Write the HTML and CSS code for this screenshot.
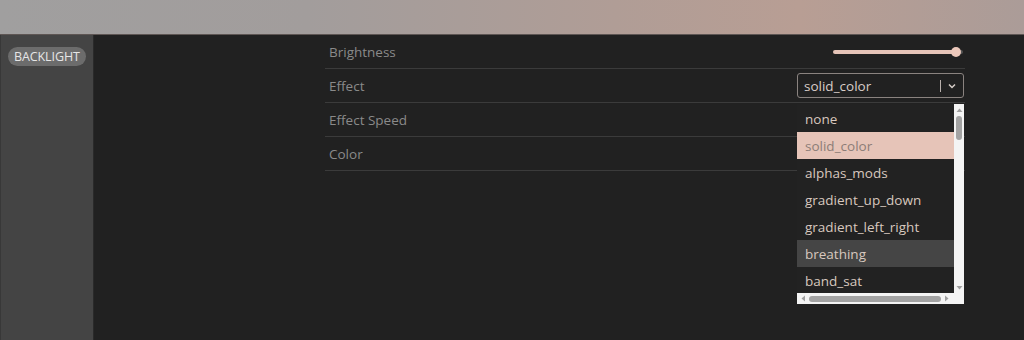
FILE: index.html
```html
<!DOCTYPE html>
<html>
<head>
<meta charset="utf-8">
<link rel="stylesheet" href="styles.css">
</head>
<body>
<header class="topbar"></header>
<div class="layout">
  <aside class="sidebar">
    <span class="badge">BACKLIGHT</span>
  </aside>
  <main class="content">
    <div class="settings">
      <div class="row">
        <span class="label">Brightness</span>
        <div class="slider">
          <div class="track"></div>
          <div class="thumb"></div>
          <div class="rest"></div>
        </div>
      </div>
      <div class="row">
        <span class="label">Effect</span>
        <div class="select-wrap">
          <div class="select">
            <span class="value">solid_color</span>
            <span class="sep"></span>
            <svg class="chev" width="10" height="10" viewBox="0 0 10 10"><path d="M2 3.5 L5 6.5 L8 3.5" fill="none" stroke="#d6cdc8" stroke-width="1.5"/></svg>
          </div>
          <div class="dropdown">
            <div class="list">
              <div class="opt">none</div>
              <div class="opt selected">solid_color</div>
              <div class="opt">alphas_mods</div>
              <div class="opt">gradient_up_down</div>
              <div class="opt">gradient_left_right</div>
              <div class="opt hover">breathing</div>
              <div class="opt">band_sat</div>
            </div>
            <div class="vscroll">
              <svg class="arrow-up" width="9" height="6" viewBox="0 0 9 6"><path d="M1.5 5 L4.5 1.5 L7.5 5 Z" fill="#a0a0a0"/></svg>
              <div class="vthumb"></div>
              <svg class="arrow-down" width="9" height="6" viewBox="0 0 9 6"><path d="M1.5 1 L4.5 4.5 L7.5 1 Z" fill="#a0a0a0"/></svg>
            </div>
            <div class="hscroll">
              <svg width="6" height="9" viewBox="0 0 6 9"><path d="M5 1.5 L1.5 4.5 L5 7.5 Z" fill="#a0a0a0"/></svg>
              <div class="hthumb"></div>
              <svg width="6" height="9" viewBox="0 0 6 9"><path d="M1 1.5 L4.5 4.5 L1 7.5 Z" fill="#a0a0a0"/></svg>
            </div>
          </div>
        </div>
      </div>
      <div class="row">
        <span class="label">Effect Speed</span>
      </div>
      <div class="row">
        <span class="label">Color</span>
      </div>
    </div>
  </main>
</div>
</body>
</html>
```

FILE: styles.css
```css
* { box-sizing: border-box; }
html, body {
  margin: 0;
  padding: 0;
  width: 1024px;
  height: 340px;
  overflow: hidden;
  background: #212121;
  font-family: "Open Sans", "Noto Sans", sans-serif;
}
.topbar {
  height: 35px;
  background: linear-gradient(90deg, #a09f9f 0%, #a29d9c 30%, #b09d96 60%, #b89e94 78%, #ab9c98 100%);
  border-bottom: 1px solid #5e5654;
}
.layout {
  display: flex;
  height: 305px;
}
.sidebar {
  width: 94px;
  background: #444444;
  border-left: 1px solid #383838;
  border-right: 1px solid #2a2a2a;
  padding: 9px 0 0 7px;
}
.badge {
  display: inline-block;
  height: 19px;
  line-height: 19px;
  padding: 0 6px 0 6px;
  border-radius: 10px;
  background: #6c6c6c;
  color: #e6e6e6;
  font-size: 12.5px;
  letter-spacing: -0.1px;
}
.content {
  flex: 1;
  padding-left: 231px;
}
.settings {
  width: 640px;
}
.row {
  height: 34px;
  border-bottom: 1px solid #3b3b3b;
  display: flex;
  align-items: center;
  justify-content: space-between;
  padding-left: 4px;
  padding-right: 1px;
}
.label {
  color: #8a8a8a;
  font-size: 13.5px;
}
.slider {
  position: relative;
  width: 131px;
  height: 10px;
  margin-right: 1px;
  margin-top: 1px;
}
.track {
  position: absolute;
  left: 1px;
  top: 3px;
  width: 124px;
  height: 4px;
  border-radius: 2px;
  background: #e6c4b8;
}
.rest {
  position: absolute;
  left: 125px;
  top: 3px;
  width: 6px;
  height: 4px;
  border-radius: 2px;
  background: #555;
}
.thumb {
  position: absolute;
  left: 119px;
  top: 0;
  width: 10px;
  height: 10px;
  border-radius: 50%;
  background: #ecc8bb;
  z-index: 1;
}
.select-wrap {
  position: relative;
}
.select {
  width: 167px;
  height: 25px;
  border: 1px solid #8a8380;
  border-radius: 3px;
  display: flex;
  align-items: center;
  padding: 0 6px 0 6px;
  color: #d8cdc8;
  font-size: 13.5px;
}
.value { flex: 1; }
.sep {
  width: 1px;
  height: 12px;
  background: #b8b0ac;
  margin-right: 6px;
}
.chev { display: block; }
.dropdown {
  position: absolute;
  left: 0;
  top: 31px;
  width: 167px;
  height: 200px;
  background: #222;
  z-index: 5;
}
.list {
  position: absolute;
  left: 0;
  top: 1px;
  width: 157px;
  height: 188px;
  overflow: hidden;
}
.opt {
  height: 27px;
  line-height: 28px;
  padding-left: 8px;
  color: #d8c8bf;
  font-size: 13.5px;
  white-space: nowrap;
}
.opt.selected {
  background: #e6c4b8;
  color: #8c7d77;
}
.opt.hover {
  background: #454545;
}
.vscroll {
  position: absolute;
  right: 0;
  top: 0;
  width: 10px;
  height: 189px;
  background: #f4f4f4;
  display: flex;
  flex-direction: column;
  align-items: center;
  padding-top: 3px;
}
.vthumb {
  width: 6px;
  height: 24px;
  border-radius: 3px;
  background: #a3a3a3;
  margin-top: 3px;
}
.arrow-down {
  margin-top: auto;
  margin-bottom: 2px;
}
.hscroll {
  position: absolute;
  left: 0;
  bottom: 0;
  width: 167px;
  height: 11px;
  background: #f4f4f4;
  display: flex;
  align-items: center;
  padding: 0 14px 0 3px;
  gap: 3px;
}
.hthumb {
  flex: 1;
  height: 6px;
  border-radius: 3px;
  background: #a3a3a3;
}
```
